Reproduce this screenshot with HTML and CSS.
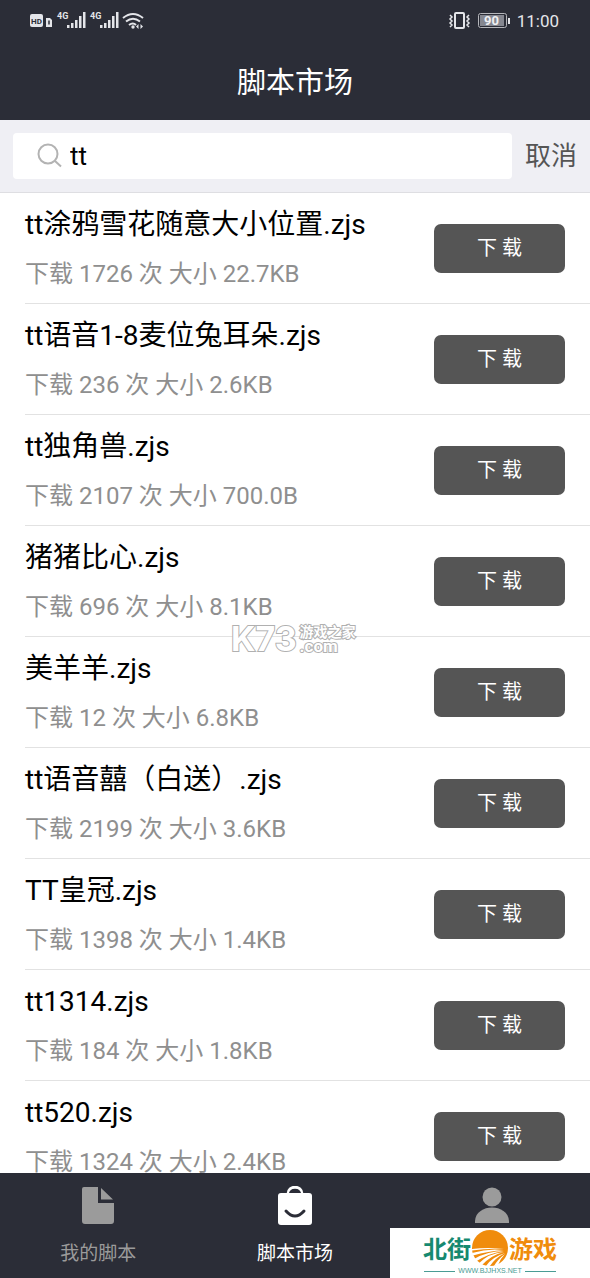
FILE: index.html
```
<!DOCTYPE html>
<html lang="zh-CN">
<head>
<meta charset="utf-8">
<meta name="viewport" content="width=device-width, initial-scale=1">
<title>脚本市场</title>
<link rel="stylesheet" href="styles.css">
</head>
<body>
<div class="app">
  <header class="header">
    <div class="status">
      <div class="status-group">
        <svg class="status-icon" width="116" height="22" viewBox="0 0 116 22" fill="#e4e5e9">
          <rect x="0" y="4" width="13" height="13" rx="2"/>
          <text x="1" y="14" font-size="8" font-weight="700" fill="#2b2d37">HD</text>
          <path d="M16 8h4l2 2v7h-6z"/><path d="M19 10.500v4" stroke="#2b2d37" stroke-width="1.500"/>
          <text x="27" y="9" font-size="9" font-weight="700">4G</text>
          <path d="M37 15h2.500v3h-2.500zM41 13h2.500v5h-2.500zM45 10h2.500v8h-2.500zM49 6h2.500v12h-2.500zM53 2h2.500v16h-2.500z"/>
          <text x="60" y="9" font-size="9" font-weight="700">4G</text>
          <path d="M70 15h2.500v3h-2.500zM74 13h2.500v5h-2.500zM78 10h2.500v8h-2.500zM82 6h2.500v12h-2.500zM86 2h2.500v16h-2.500z"/>
          <g fill="none" stroke="#e4e5e9" stroke-width="2"><path d="M93 8q10-8 20 0M96 11.500q7-5.500 14 0M99 15q4-3 7 0"/></g>
          <circle cx="103" cy="17" r="1.700"/><path d="M108.500 14l-2.500 2.500 2.500 2.500zM110.500 14l2.500 2.500-2.500 2.500z"/>
        </svg>
      </div>
      <div class="status-group">
        <svg class="status-icon" width="64" height="22" viewBox="0 0 64 22" fill="none" stroke="#e4e5e9">
          <rect x="7" y="3" width="9" height="15" rx="1" stroke-width="2"/>
          <path d="M2 5l2 2-2 2 2 2-2 2 2 2-2 2M21 5l-2 2 2 2-2 2 2 2-2 2 2 2" stroke-width="1.500"/>
          <rect x="30.500" y="3.500" width="28" height="14" rx="2" stroke="#b5b6bb"/>
          <rect x="32" y="5" width="24" height="11" fill="#858790" stroke="none"/>
          <path d="M61 8v6" stroke-width="2"/>
          <text x="36" y="15" font-size="13" font-weight="700" fill="#f0f0f2" stroke="none">90</text>
        </svg>
        <time class="clock">11:00</time>
      </div>
    </div>
    <h1 class="title">脚本市场</h1>
  </header>

  <form class="search">
    <label class="search-box">
      <svg width="26" height="26" viewBox="0 0 26 26" fill="none" stroke="#b3b3b3" stroke-width="2" aria-hidden="true"><circle cx="11" cy="11" r="9.500"/><path d="M18 18l6 5.500"/></svg>
      <input class="search-input" type="text" value="tt" aria-label="搜索">
    </label>
    <button class="cancel" type="button">取消</button>
  </form>

  <main class="market">
    <ul class="list">
      <li class="item"><div class="info"><h2 class="name">tt涂鸦雪花随意大小位置.zjs</h2><p class="meta">下载 1726 次 大小 22.7KB</p></div><button class="download" type="button">下 载</button></li>
      <li class="item"><div class="info"><h2 class="name">tt语音1-8麦位兔耳朵.zjs</h2><p class="meta">下载 236 次 大小 2.6KB</p></div><button class="download" type="button">下 载</button></li>
      <li class="item"><div class="info"><h2 class="name">tt独角兽.zjs</h2><p class="meta">下载 2107 次 大小 700.0B</p></div><button class="download" type="button">下 载</button></li>
      <li class="item"><div class="info"><h2 class="name">猪猪比心.zjs</h2><p class="meta">下载 696 次 大小 8.1KB</p></div><button class="download" type="button">下 载</button></li>
      <li class="item"><div class="info"><h2 class="name">美羊羊.zjs</h2><p class="meta">下载 12 次 大小 6.8KB</p></div><button class="download" type="button">下 载</button></li>
      <li class="item"><div class="info"><h2 class="name">tt语音囍（白送）.zjs</h2><p class="meta">下载 2199 次 大小 3.6KB</p></div><button class="download" type="button">下 载</button></li>
      <li class="item"><div class="info"><h2 class="name">TT皇冠.zjs</h2><p class="meta">下载 1398 次 大小 1.4KB</p></div><button class="download" type="button">下 载</button></li>
      <li class="item"><div class="info"><h2 class="name">tt1314.zjs</h2><p class="meta">下载 184 次 大小 1.8KB</p></div><button class="download" type="button">下 载</button></li>
      <li class="item"><div class="info"><h2 class="name">tt520.zjs</h2><p class="meta">下载 1324 次 大小 2.4KB</p></div><button class="download" type="button">下 载</button></li>
    </ul>
  </main>

  <nav class="tabs">
    <button class="tab" type="button">
      <svg width="40" height="40" viewBox="0 0 40 40" fill="#9b9b9b"><path d="M6 1h14v16h16v18a3 3 0 0 1-3 3H7a3 3 0 0 1-3-3V3a2 2 0 0 1 2-2zM23 2l12 11.500H23z"/></svg>
      <span>我的脚本</span>
    </button>
    <button class="tab tab-active" type="button">
      <svg width="40" height="40" viewBox="0 0 40 40" fill="none"><path d="M13 8c0-9 14-9 14 0" stroke="#fff" stroke-width="3"/><rect x="3" y="7" width="34" height="32" rx="3" fill="#fff"/><path d="M14 7c1-5 11-5 12 0z" fill="#2b2d37"/><path d="M11 25q9 10 18 0" stroke="#2b2d37" stroke-width="3" stroke-linecap="round"/></svg>
      <span>脚本市场</span>
    </button>
    <button class="tab" type="button" aria-label="个人中心">
      <svg width="40" height="40" viewBox="0 0 40 40" fill="#9b9b9b"><circle cx="20" cy="11" r="9.500"/><path d="M3 37v-2c1-18 33-18 34 0v2z"/></svg>
    </button>
  </nav>

  <div class="watermark"><span class="mark-main">K73</span><span class="mark-side"><span>游戏之家</span><span class="mark-com">.com</span></span></div>

  <div class="brand">
    <div class="brand-row">
      <span class="brand-green">北街</span>
      <svg width="36" height="36" viewBox="0 0 36 36"><circle cx="18" cy="18" r="18" fill="#f08c0c"/><path d="M0 19q16-2 32 0q-16-1-32 1.500zM0 23q16-5 32-3q-16 1-31 5.500zM2 29q14-8 30-8q-15 2-29 11zM6 34q11-11 26-12q-13 3-23 14zM14 36q6-9 19-13q-10 5-15 13zM22 36q4-7 11-12q-5 5-7 11z" fill="#fff"/></svg>
      <span class="brand-orange">游戏</span>
    </div>
    <div class="brand-url">WWW.BJJHXS.NET</div>
  </div>
</div>
</body>
</html>
```

FILE: styles.css
```
* { box-sizing: border-box; }

body, h1, h2, p, ul { margin: 0; padding: 0; }

body, button, input {
  font-family: Roboto, "Noto Sans CJK SC", sans-serif;
  font-weight: 400;
}

button { border: 0; padding: 0; cursor: pointer; }

.app {
  position: relative;
  display: flex;
  flex-direction: column;
  height: 100vh;
  overflow: hidden;
  background: #fff;
}

.header { background: #2b2d37; color: #fff; }

.status {
  display: flex;
  justify-content: space-between;
  align-items: center;
  height: 42px;
  padding: 0 31px 0 30px;
}

.status-group { display: flex; align-items: center; gap: 5px; }
.status-icon { display: block; }
.clock { font-size: 17px; line-height: 22px; color: #e4e5e9; }

.title {
  height: 78px;
  padding-top: 3px;
  font-size: 29px;
  line-height: 76px;
  font-weight: 400;
  text-align: center;
}

.search {
  display: flex;
  align-items: center;
  gap: 13px;
  padding: 13px;
  background: #efeff4;
  border-bottom: 1px solid #dedee2;
}

.search-box {
  display: flex;
  flex: 1;
  align-items: center;
  gap: 7px;
  height: 46px;
  padding: 0 24px;
  border-radius: 4px;
  background: #fff;
}

.search-input {
  flex: 1;
  min-width: 0;
  padding: 0;
  border: 0;
  outline: 0;
  background: none;
  color: #000;
  font-size: 26px;
  line-height: 40px;
}

.cancel { background: none; color: #555; font-size: 26px; line-height: 40px; }

.market { flex: 1; min-height: 0; overflow: hidden; }
.list { list-style: none; padding-left: 25px; }

.item {
  display: flex;
  justify-content: space-between;
  align-items: center;
  height: 111px;
  padding-right: 25px;
  border-bottom: 1px solid #e2e2e2;
}

.info { padding-bottom: 4px; }
.name { font-size: 28px; line-height: 40px; font-weight: 400; color: #000; }
.meta { margin-top: 15px; font-size: 24px; line-height: 28px; color: #8f8f8f; }

.download {
  width: 131px;
  height: 49px;
  padding-bottom: 3px;
  border-radius: 7px;
  background: #555;
  color: #fff;
  font-size: 20px;
}

.tabs {
  display: grid;
  grid-template-columns: repeat(3, 1fr);
  height: 105px;
  background: #2b2d37;
}

.tab {
  display: flex;
  flex-direction: column;
  align-items: center;
  gap: 13px;
  padding-top: 13px;
  background: none;
  color: #9b9b9b;
  font-size: 19px;
  line-height: 30px;
}

.tab-active { color: #fff; }

.watermark {
  position: absolute;
  top: 624px;
  left: 231px;
  display: flex;
  align-items: center;
  gap: 3px;
  color: #fff;
  font-weight: 700;
  -webkit-text-stroke: 2px #b0b0b0;
  paint-order: stroke fill;
}

.mark-main { font-family: Inter, sans-serif; font-size: 34px; line-height: 30px; }
.mark-side { display: flex; flex-direction: column; font-size: 14px; line-height: 14px; }
.mark-com { font-size: 17px; }

.brand {
  position: absolute;
  right: 0;
  bottom: 0;
  display: flex;
  flex-direction: column;
  align-items: center;
  width: 200px;
  height: 50px;
  padding-top: 2px;
  background: #fff;
}

.brand-row {
  display: flex;
  align-items: center;
  gap: 1px;
  font-family: "Noto Sans CJK SC", sans-serif;
  font-size: 24px;
  line-height: 36px;
  font-weight: 700;
}

.brand-green { color: #168970; }
.brand-orange { color: #f08c0c; }

.brand-url {
  display: flex;
  align-items: center;
  gap: 3px;
  color: #4a9c94;
  font-family: "Liberation Sans", sans-serif;
  font-size: 7px;
  line-height: 10px;
}

.brand-url::before, .brand-url::after {
  content: "";
  width: 31px;
  height: 1px;
  background: #4a9c94;
}
```
